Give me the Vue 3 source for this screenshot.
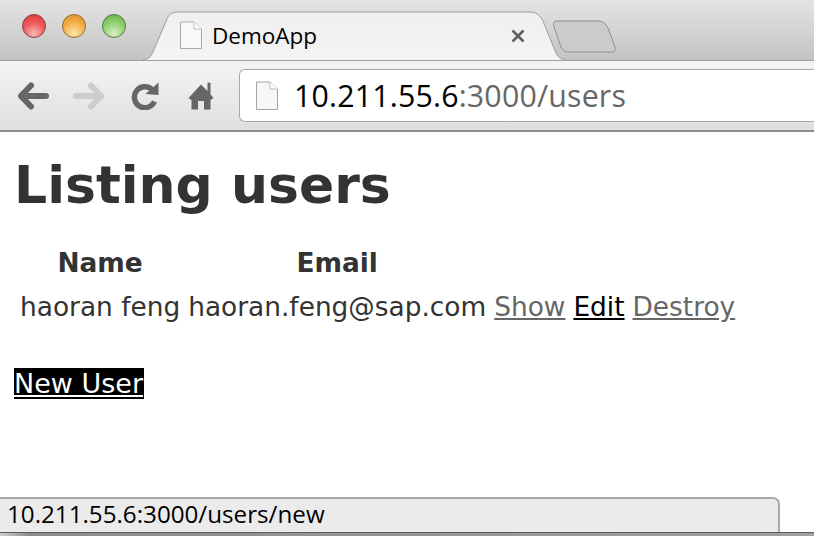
<template>
  <div class="win">
    <header class="chrome">
      <div class="strip">
        <div class="lights">
          <span class="light light--red"></span>
          <span class="light light--amber"></span>
          <span class="light light--green"></span>
        </div>
        <div class="tab">
          <svg class="tab__bg" width="424" height="50" viewBox="0 0 424 50">
            <defs>
              <linearGradient id="tabfill" x1="0" y1="0" x2="0" y2="1">
                <stop offset="0" stop-color="#efefef" />
                <stop offset="1" stop-color="#f4f4f4" />
              </linearGradient>
            </defs>
            <path d="M0 50 C6 49 8 47 10 42 L24 9 C26 4 29 2 35 2 L386 2 C393 2 397 5 400 11 L413 43 C415 47 417 49 422 50 Z" fill="url(#tabfill)" />
            <path d="M0 49.5 C6 49 8 47 10 42 L24 9 C26 4 29 2 35 2 L386 2 C393 2 397 5 400 11 L413 43 C415 47 417 49 422 49.5" fill="none" stroke="#9d9d9d" stroke-width="1" />
          </svg>
          <svg class="tab__doc" width="24" height="29" viewBox="0 0 24 29">
            <path d="M1.5 1 H15 L22.5 8 V27.5 H1.5 Z" fill="#f8f8f8" stroke="#a9a9a9" />
            <path d="M15 1 V8 H22.5" fill="#fff" stroke="#bdbdbd" />
          </svg>
          <span class="tab__title">DemoApp</span>
          <svg class="tab__close" width="16" height="16" viewBox="0 0 16 16">
            <path d="M2.5 2.5 L13.5 13.5 M13.5 2.5 L2.5 13.5" stroke="#5e5e5e" stroke-width="2.6" />
          </svg>
        </div>
        <svg class="newtab" width="64" height="34" viewBox="0 0 64 34">
          <path d="M3 1 H45 C50 1 53 4 55 8 L62 27 C63 31 62 32 59 32 H16 C12 32 10 31 8 27 L1 7 C0 3 1 1 3 1 Z" fill="#cbcbcb" stroke="#8f8f8f" />
        </svg>
      </div>
      <div class="toolbar">
        <div class="nav">
          <svg class="nav__icon" width="32" height="28" viewBox="0 0 32 28">
            <path d="M14 3.5 L4 14 L14 24.5 M4 14 H29" fill="none" stroke="#666" stroke-width="6" stroke-linecap="round" stroke-linejoin="round" />
          </svg>
          <svg class="nav__icon" width="32" height="28" viewBox="0 0 32 28">
            <path d="M18 3.5 L28 14 L18 24.5 M3 14 H28" fill="none" stroke="#cdcdcd" stroke-width="6" stroke-linecap="round" stroke-linejoin="round" />
          </svg>
          <svg class="nav__icon nav__icon--reload" width="28" height="28" viewBox="0 0 28 28">
            <path d="M21 7.5 A10.5 10.5 0 1 0 23.5 19.5" fill="none" stroke="#666" stroke-width="5.4" />
            <path d="M14.5 12 L27.5 13 L27.5 0.5 Z" fill="#666" />
          </svg>
          <svg class="nav__icon nav__icon--home" width="26" height="28" viewBox="0 0 26 28">
            <path d="M13 2.5 L0.5 16 L3.5 18 L3.5 27.5 L10 27.5 L10 19 L16 19 L16 27.5 L22.5 27.5 L22.5 18 L25.5 16 L22.5 12.5 L22.5 1 L19.5 0.5 L19.5 9 Z" fill="#666" />
          </svg>
        </div>
        <div class="omnibox">
          <svg class="omnibox__doc" width="24" height="30" viewBox="0 0 24 30">
            <path d="M1.5 1 H15 L22.5 8 V28.5 H1.5 Z" fill="#f7f7f7" stroke="#a4a4a4" />
            <path d="M15 1 V8 H22.5" fill="#fff" stroke="#bbb" />
          </svg>
          <span class="omnibox__url"><span class="omnibox__host">10.211.55.6</span>:3000/users</span>
        </div>
      </div>
    </header>

    <main class="page">
      <h1 class="title">Listing users</h1>
      <table class="users">
        <thead>
          <tr>
            <th>Name</th>
            <th>Email</th>
            <th></th>
            <th></th>
            <th></th>
          </tr>
        </thead>
        <tbody>
          <tr v-for="user in users" :key="user.email">
            <td>{{ user.name }}</td>
            <td>{{ user.email }}</td>
            <td><a class="link" href="#">Show</a></td>
            <td><a class="link link--hover" href="#">Edit</a></td>
            <td><a class="link" href="#">Destroy</a></td>
          </tr>
        </tbody>
      </table>
      <a class="new-user" href="#">New User</a>
    </main>

    <div class="status">10.211.55.6:3000/users/new</div>
    <div class="shelf"></div>
  </div>
</template>

<script setup>
const users = [{ name: 'haoran feng', email: 'haoran.feng@sap.com' }]
</script>

<style>
html,
body {
  margin: 0;
  background: #fff;
  overflow: hidden;
}
</style>

<style scoped>
.win {
  position: relative;
  width: 814px;
  height: 536px;
  overflow: hidden;
  background: #fff;
}

.chrome {
  height: 132px;
  font-family: "Open Sans", "Noto Sans", sans-serif;
}

.strip {
  display: flex;
  align-items: flex-start;
  height: 61px;
  box-sizing: border-box;
  background: linear-gradient(180deg, #e4e4e4 0%, #c3c3c3 100%);
  border-bottom: 1px solid #a0a0a0;
}

.lights {
  display: flex;
  flex: none;
  gap: 16px;
  padding: 14px 0 0 22px;
  width: 143px;
  box-sizing: border-box;
}

.light {
  flex: none;
  width: 24px;
  height: 24px;
  border-radius: 50%;
  box-sizing: border-box;
}

.light--red {
  border: 1px solid #8c3b3f;
  background: radial-gradient(circle at 50% 85%, #f9b9b5 0%, #ef5a5c 50%, #d8373c 100%);
}

.light--amber {
  border: 1px solid #96692c;
  background: radial-gradient(circle at 50% 85%, #fce6a8 0%, #f1ac46 55%, #dc8c2c 100%);
}

.light--green {
  border: 1px solid #4f7f3c;
  background: radial-gradient(circle at 50% 85%, #d5eec4 0%, #8ccf6c 55%, #63ae45 100%);
}

.tab {
  position: relative;
  display: flex;
  align-items: center;
  width: 424px;
  height: 50px;
  margin-top: 10px;
  flex: none;
  box-sizing: border-box;
  padding: 1px 0 0 36px;
}

.tab__bg {
  position: absolute;
  left: 0;
  top: 0;
}

.tab__doc,
.tab__title,
.tab__close {
  position: relative;
  flex: none;
}

.tab__title {
  margin-left: 9px;
  font-size: 22.5px;
  color: #000;
  width: 298px;
}

.newtab {
  flex: none;
  margin: 20px 0 0 -14px;
  position: relative;
}

.toolbar {
  display: flex;
  align-items: flex-start;
  height: 71px;
  box-sizing: border-box;
  background: linear-gradient(180deg, #f4f4f4 0%, #dfdfdf 100%);
  border-bottom: 2px solid #8e8e8e;
}

.nav {
  display: flex;
  align-items: center;
  width: 239px;
  box-sizing: border-box;
  padding: 21px 0 0 17px;
  flex: none;
}

.nav__icon {
  flex: none;
  margin-right: 24px;
}

.nav__icon--reload {
  margin-left: 2px;
  margin-right: 29px;
}

.nav__icon--home {
  margin-right: 0;
}

.omnibox {
  display: flex;
  align-items: center;
  flex: 1;
  height: 53px;
  margin-top: 8px;
  padding-left: 15px;
  box-sizing: border-box;
  background: #fff;
  border: 1px solid #a9a9a9;
  border-right: none;
  border-radius: 6px 0 0 6px;
}

.omnibox__doc {
  flex: none;
  margin-top: 1px;
}

.omnibox__url {
  margin: 2px 0 0 15px;
  font-size: 30.3px;
  line-height: 1;
  color: #676767;
  letter-spacing: 0.2px;
}

.omnibox__host {
  color: #000;
}

.page {
  padding: 0 16px;
  font-family: "DejaVu Sans", Verdana, sans-serif;
  color: #333;
}

.title {
  margin: 20px 0 0 -2px;
  font-size: 52px;
  line-height: 66px;
  font-weight: 700;
  color: #333;
}

.users {
  margin: 22px 0 0 -1px;
  border-collapse: separate;
  border-spacing: 2px;
  font-size: 26.4px;
  line-height: 34px;
}

.users th {
  padding: 4px 3px;
  font-weight: 700;
  text-align: center;
}

.users td {
  padding: 4px 3px;
}

.link {
  color: #666;
  text-decoration: underline;
}

.link--hover {
  color: #000;
}

.new-user {
  display: inline-block;
  margin-top: 38px;
  margin-left: -2px;
  padding-right: 1px;
  font-size: 27px;
  line-height: 31px;
  color: #fff;
  background: #000;
  text-decoration: underline;
}

.status {
  position: absolute;
  left: 0;
  bottom: 4px;
  width: 780px;
  height: 35px;
  box-sizing: border-box;
  padding-left: 7px;
  font-family: "Open Sans", "Noto Sans", sans-serif;
  font-size: 24.2px;
  line-height: 30px;
  color: #000;
  background: #ebebeb;
  border: 2px solid #a8a8a8;
  border-left: none;
  border-bottom: none;
  border-radius: 0 7px 0 0;
}

.shelf {
  position: absolute;
  left: 0;
  right: 0;
  bottom: 0;
  height: 4px;
  background: linear-gradient(90deg, #d0d0d0 0, #8c8c8c 30px, #a0a0a0 100%);
  border-top: 1px solid #5c5c5c;
  box-sizing: border-box;
}
</style>
